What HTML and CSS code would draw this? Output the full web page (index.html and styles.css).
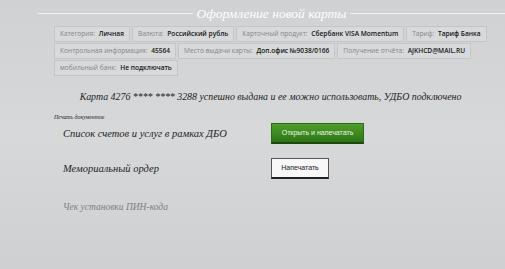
FILE: index.html
```html
<!DOCTYPE html>
<html>

<head>
  <title>Оформление новой карты</title>
  <link rel="stylesheet" href="styles.css">
</head>

<body>
  <div class="header">
    <div class="line"></div>
    <div class="title">Оформление новой карты</div>
    <div class="line"></div>
  </div>

  <div class="tags">
    <div class="tag">Категория: <b>Личная</b></div>
    <div class="tag">Валюта: <b>Российский рубль</b></div>
    <div class="tag">Карточный продукт: <b>Сбербанк VISA Momentum</b></div>
    <div class="tag">Тариф: <b>Тариф Банка</b></div>
    <div class="tag">Контрольная информация: <b>45564</b></div>
    <div class="tag">Место выдачи карты: <b>Доп.офис №9038/0166</b></div>
    <div class="tag">Получение отчёта: <b>AJKHCD@MAIL.RU</b></div>
    <div class="tag">мобильный банк: <b>Не подключать</b></div>
  </div>

  <div class="message">Карта 4276 **** **** 3288 успешно выдана и ее можно использовать, УДБО подключено</div>

  <div class="print">
    <div class="print-title">Печать документов</div>
    <div class="doc">
      <div class="doc-name">Список счетов и услуг в рамках ДБО</div>
      <button class="btn btn-green">Открыть и напечатать</button>
    </div>
    <div class="doc">
      <div class="doc-name">Мемориальный ордер</div>
      <button class="btn btn-white">Напечатать</button>
    </div>
    <div class="doc">
      <div class="doc-name disabled">Чек установки ПИН-кода</div>
    </div>
  </div>
</body>

</html>
```

FILE: styles.css
```css
html {
  height: 100%;
}

body {
  margin: 0;
  min-height: 100%;
  background: linear-gradient(180deg, #d0d1d3 0%, #d7d8da 50%, #cfd0d2 100%);
  font-family: "Open Sans", "DejaVu Sans", sans-serif;
}

.header {
  display: flex;
  align-items: center;
  gap: 4px;
  padding: 5px 0 0 38px;
  height: 17px;
}

.line {
  flex: 1;
  height: 1px;
  background: #f2f2f3;
}

.title {
  font-family: "Liberation Serif", serif;
  font-style: italic;
  font-size: 13.5px;
  color: #fff;
  line-height: 17px;
}

.tags {
  display: flex;
  flex-wrap: wrap;
  gap: 1px 2px;
  margin: 4px 0 0 54px;
  width: 434px;
}

.tag {
  height: 14px;
  line-height: 14px;
  padding: 0 5px;
  border: 1px solid #c4c5c7;
  background: #d8d9db;
  font-size: 6.6px;
  color: #858688;
  white-space: nowrap;
}

.tag b {
  font-weight: 600;
  color: #151515;
  margin-left: 2px;
}

.message {
  margin-top: 14px;
  line-height: 14px;
  text-align: center;
  padding-left: 36px;
  font-family: "Liberation Serif", serif;
  font-style: italic;
  font-size: 9.9px;
  color: #1c1c1c;
  white-space: nowrap;
}

.print {
  margin: 9px 0 0 54px;
}

.print-title {
  height: 8px;
  line-height: 8px;
  font-family: "Liberation Serif", serif;
  font-style: italic;
  font-size: 5.8px;
  color: #222;
}

.doc {
  display: flex;
  align-items: center;
  height: 24px;
  margin-top: 11px;
  padding-left: 9px;
}

.print-title + .doc {
  margin-top: 0;
}

.doc-name {
  width: 208px;
  font-family: "Liberation Serif", serif;
  font-style: italic;
  font-size: 10.5px;
  color: #1e1e1e;
}

.doc-name.disabled {
  margin-top: 7px;
  color: #7d7e80;
  font-size: 9.5px;
}

.btn {
  height: 21px;
  padding: 0;
  font-family: "Liberation Sans", Arial, sans-serif;
  font-size: 7px;
  cursor: pointer;
}

.btn-green {
  width: 93px;
  color: #eaf5e4;
  border: 1px solid #2d6a14;
  border-bottom: 2px solid #1d4a0b;
  background: linear-gradient(180deg, #4f9e2c 0%, #3c8820 55%, #2d7416 100%);
}

.btn-white {
  width: 58px;
  color: #222;
  background: #f8f8f8;
  border: 1px solid #555;
  border-bottom: 2px solid #222;
}
```
